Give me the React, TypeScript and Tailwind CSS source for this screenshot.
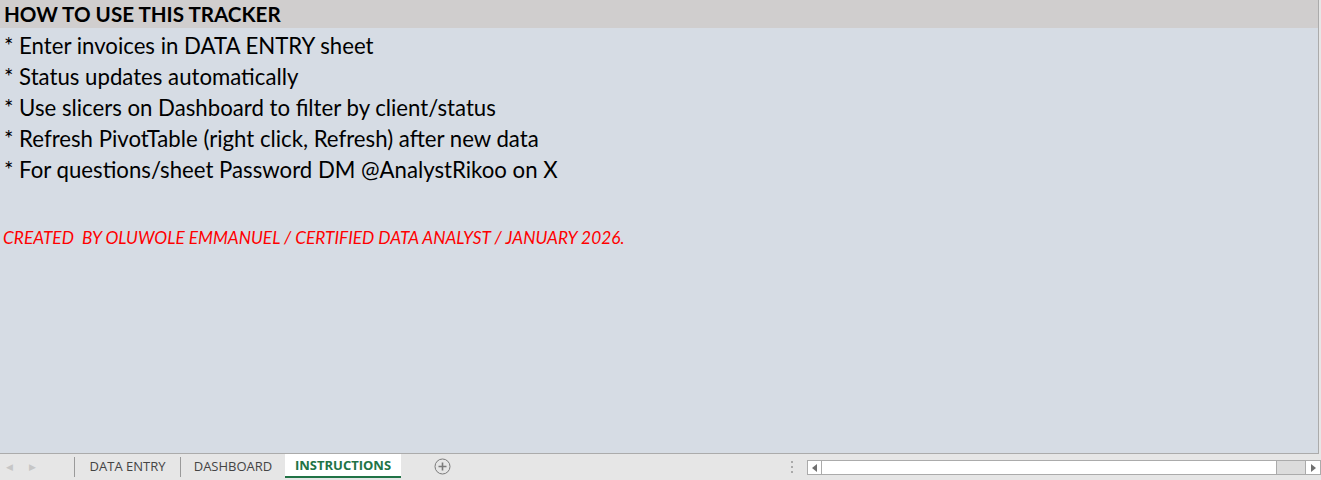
import React from 'react';

const items = [
  '* Enter invoices in DATA ENTRY sheet',
  '* Status updates automatically',
  '* Use slicers on Dashboard to filter by client/status',
  '* Refresh PivotTable (right click, Refresh) after new data',
  '* For questions/sheet Password DM @AnalystRikoo on X',
];

const App = () => {
  return (
    <div className="h-[480px] w-[1321px] flex flex-col bg-[#e6e6e6] font-['Lato',sans-serif] overflow-hidden">
      {/* sheet area */}
      <div className="h-[454px] w-[1319px] flex flex-col bg-[#d6dce4] border-r border-b border-[#ababab]">
        <div className="h-[28px] bg-[#d0cece] pl-[4px] text-[20.6px] leading-[28px] font-bold text-black">
          HOW TO USE THIS TRACKER
        </div>
        <div className="flex flex-col pt-[2px]">
          {items.map((t) => (
            <div key={t} className="h-[31px] pl-[4px] text-[22.2px] leading-[31px] text-black">
              {t}
            </div>
          ))}
        </div>
        <div className="mt-[43px] pl-[3px] text-[17.3px] leading-[20px] italic text-[#ff0000]">
          CREATED&nbsp; BY OLUWOLE EMMANUEL / CERTIFIED DATA ANALYST / JANUARY 2026.
        </div>
      </div>

      {/* tab bar */}
      <div className="flex-1 flex items-start text-[13px] font-['Open_Sans',sans-serif]">
        <div className="w-[74px] h-[26px] flex items-center gap-[16px] pl-[6px] text-[#c6c6c6] text-[9px]">
          <span>◀</span>
          <span>▶</span>
        </div>
        <div className="h-[20px] mt-[3px] w-px bg-[#9a9a9a]" />
        <div className="w-[105px] h-[24px] pt-[2px] flex items-center justify-center text-[#444]">DATA ENTRY</div>
        <div className="h-[20px] mt-[3px] w-px bg-[#9a9a9a]" />
        <div className="w-[104px] h-[24px] pt-[2px] flex items-center justify-center text-[#444]">DASHBOARD</div>
        <div className="w-[116px] h-[24px] pt-[2px] flex items-center justify-center bg-white border-b-2 border-[#217346] text-[#217346] font-bold">
          INSTRUCTIONS
        </div>
        <div className="ml-[33px] mt-[4px]">
          <svg width="17" height="17" viewBox="0 0 17 17">
            <circle cx="8.5" cy="8.5" r="7.5" fill="none" stroke="#7a7a7a" strokeWidth="1" />
            <path d="M8.5 4.5v8M4.5 8.5h8" stroke="#7a7a7a" strokeWidth="1.6" />
          </svg>
        </div>
        <div className="ml-[340px] mt-[7px] flex flex-col gap-[3px]">
          <span className="w-[2px] h-[2px] bg-[#aaa]" />
          <span className="w-[2px] h-[2px] bg-[#aaa]" />
          <span className="w-[2px] h-[2px] bg-[#aaa]" />
        </div>
        <div className="ml-[14px] mt-[6px] h-[15px] flex-1 flex border border-[#ababab] bg-white">
          <div className="w-[14px] flex items-center justify-center border-r border-[#ababab]">
            <svg width="6" height="8" viewBox="0 0 6 8"><path d="M5 0v8L0 4z" fill="#707070" /></svg>
          </div>
          <div className="w-[455px] border-r border-[#ababab]" />
          <div className="flex-1 bg-[#dcdcdc]" />
          <div className="w-[15px] flex items-center justify-center border-l border-[#ababab] bg-white">
            <svg width="6" height="8" viewBox="0 0 6 8"><path d="M1 0v8L6 4z" fill="#707070" /></svg>
          </div>
        </div>
      </div>
    </div>
  );
};

export default App;
